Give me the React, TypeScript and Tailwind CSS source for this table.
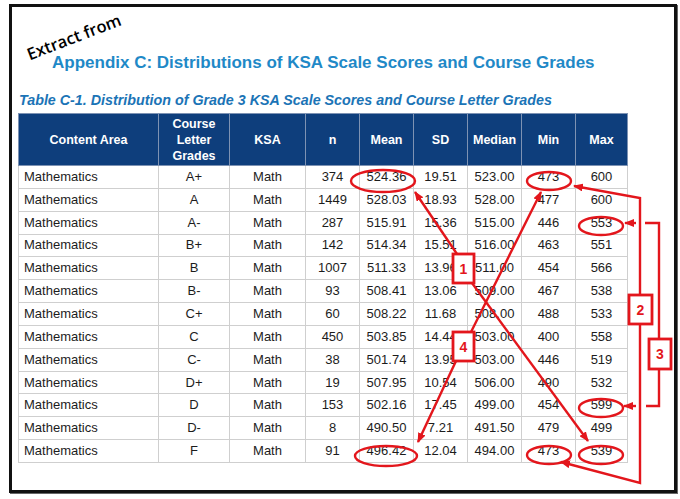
import React from "react";

const rows: string[][] = [
  ["A+", "374", "524.36", "19.51", "523.00", "473", "600"],
  ["A", "1449", "528.03", "18.93", "528.00", "477", "600"],
  ["A-", "287", "515.91", "15.36", "515.00", "446", "553"],
  ["B+", "142", "514.34", "15.51", "516.00", "463", "551"],
  ["B", "1007", "511.33", "13.96", "511.00", "454", "566"],
  ["B-", "93", "508.41", "13.06", "509.00", "467", "538"],
  ["C+", "60", "508.22", "11.68", "508.00", "488", "533"],
  ["C", "450", "503.85", "14.44", "503.00", "400", "558"],
  ["C-", "38", "501.74", "13.95", "503.00", "446", "519"],
  ["D+", "19", "507.95", "10.54", "506.00", "490", "532"],
  ["D", "153", "502.16", "17.45", "499.00", "454", "599"],
  ["D-", "8", "490.50", "7.21", "491.50", "479", "499"],
  ["F", "91", "496.42", "12.04", "494.00", "473", "539"],
];

const RED = "#e3161c";

function Annotations() {
  const ellipses = [
    [383, 181, 32, 11],
    [549, 181, 22, 9],
    [601, 226, 22, 9],
    [601, 408, 22, 9],
    [549, 455, 22, 9],
    [601, 455, 22, 9],
    [386, 456, 31, 10],
  ];
  const boxes: [number, number, number, number, string][] = [
    [453, 254, 21, 29, "1"],
    [453, 332, 21, 29, "4"],
    [629, 295, 23, 29, "2"],
    [649, 339, 22, 30, "3"],
  ];
  return (
    <svg
      className="absolute inset-0 pointer-events-none"
      width={680}
      height={499}
      viewBox="0 0 680 499"
    >
      <defs>
        <marker
          id="ah"
          markerUnits="userSpaceOnUse"
          markerWidth="10"
          markerHeight="8"
          refX="9"
          refY="4"
          orient="auto"
        >
          <path d="M0,0 L10,4 L0,8 z" fill={RED} />
        </marker>
      </defs>
      <g fill="none" stroke={RED} strokeWidth={2.4}>
        {ellipses.map(([cx, cy, rx, ry], i) => (
          <ellipse key={i} cx={cx} cy={cy} rx={rx} ry={ry} />
        ))}
        <line x1={457} y1={254} x2={415} y2={192} markerEnd="url(#ah)" />
        <line x1={472} y1={283} x2={588} y2={441} markerEnd="url(#ah)" />
        <line x1={471} y1={332} x2={541} y2={192} markerEnd="url(#ah)" />
        <line x1={456} y1={361} x2={418} y2={442} markerEnd="url(#ah)" />
        <polyline points="640,295 640,198 574,186" markerEnd="url(#ah)" />
        <polyline points="640,324 640,483 561,462" markerEnd="url(#ah)" />
        <polyline points="659,339 659,223 645,223" />
        <line x1={636} y1={223} x2={625} y2={223} markerEnd="url(#ah)" />
        <polyline points="659,369 659,406 646,406" />
        <line x1={636} y1={406} x2={624} y2={406} markerEnd="url(#ah)" />
      </g>
      {boxes.map(([x, y, w, h, t]) => (
        <g key={t}>
          <rect x={x} y={y} width={w} height={h} fill="white" stroke={RED} strokeWidth={2.8} />
          <text
            x={x + w / 2}
            y={y + h / 2 + 5}
            textAnchor="middle"
            fill={RED}
            fontFamily="Liberation Sans, Arial, sans-serif"
            fontWeight="bold"
            fontSize="14"
          >
            {t}
          </text>
        </g>
      ))}
    </svg>
  );
}

export default function App() {
  return (
    <div className="relative w-[680px] h-[499px] bg-white pt-[4px] pl-[9px] overflow-hidden font-['Liberation_Sans',Arial,sans-serif]">
      <div className="w-[668px] h-[489px] border-[3px] border-[#111] shadow-[1px_1px_0_#666]">
        <div className="mt-[46px] pl-[40px] text-[17px] leading-[20px] font-bold text-[#1f89c7] whitespace-nowrap">
          Appendix C: Distributions of KSA Scale Scores and Course Grades
        </div>
        <div className="mt-[18px] pl-[7px] text-[14.3px] leading-[18px] font-bold italic text-[#1b74b6] whitespace-nowrap">
          Table C-1. Distribution of Grade 3 KSA Scale Scores and Course Letter Grades
        </div>
        <table className="mt-[4px] ml-[6px] w-[609px] table-fixed border-collapse">
          <colgroup>
            <col className="w-[140px]" />
            <col className="w-[71px]" />
            <col className="w-[76px]" />
            <col className="w-[54px]" />
            <col className="w-[54px]" />
            <col className="w-[54px]" />
            <col className="w-[54px]" />
            <col className="w-[54px]" />
            <col className="w-[52px]" />
          </colgroup>
          <thead>
            <tr className="h-[52px] bg-[#0e3e7c] text-white text-[12.5px] leading-[16px] font-bold">
              {["Content Area", "Course Letter Grades", "KSA", "n", "Mean", "SD", "Median", "Min", "Max"].map((h) => (
                <th
                  key={h}
                  className="border border-[#7d92b3] text-center align-middle px-[2px] font-bold"
                >
                  {h === "Course Letter Grades" ? (
                    <>
                      Course
                      <br />
                      Letter
                      <br />
                      Grades
                    </>
                  ) : (
                    h
                  )}
                </th>
              ))}
            </tr>
          </thead>
          <tbody className="text-[13px] leading-[16px] text-[#1c1c1c]">
            {rows.map((r, i) => (
              <tr key={i} className="h-[22.85px]">
                <td className="border border-[#cfcfcf] pl-[5px] text-left align-middle">Mathematics</td>
                <td className="border border-[#cfcfcf] text-center align-middle">{r[0]}</td>
                <td className="border border-[#cfcfcf] text-center align-middle">Math</td>
                {r.slice(1).map((v, j) => (
                  <td key={j} className="border border-[#cfcfcf] text-center align-middle">
                    {v}
                  </td>
                ))}
              </tr>
            ))}
          </tbody>
        </table>
      </div>
      <div className="absolute left-[21px] top-[25px] w-[106px] text-center text-[16.5px] leading-[24px] font-semibold text-black font-['Open_Sans',sans-serif] rotate-[-21deg] whitespace-nowrap">
        Extract from
      </div>
      <Annotations />
    </div>
  );
}
